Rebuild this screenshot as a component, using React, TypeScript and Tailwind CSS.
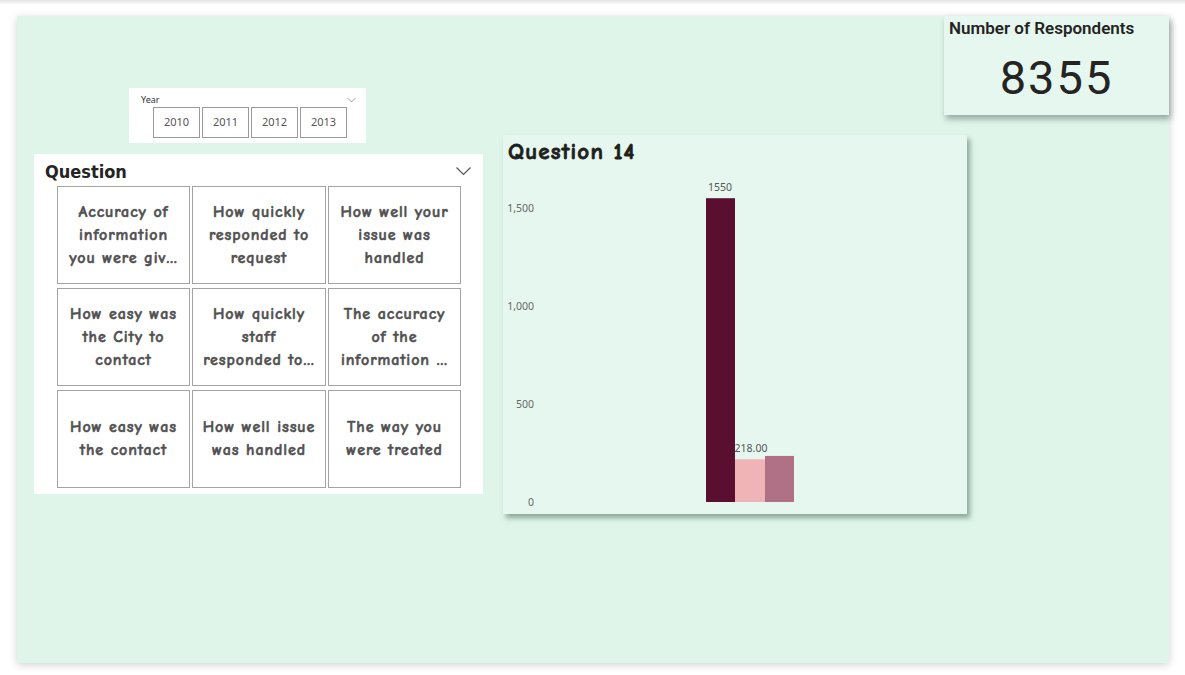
import React from "react";

const comic = { fontFamily: '"Comic Sans MS", "Comic Neue", cursive' };

const questions: string[][] = [
  ["Accuracy of", "information", "you were giv…"],
  ["How quickly", "responded to", "request"],
  ["How well your", "issue was", "handled"],
  ["How easy was", "the City to", "contact"],
  ["How quickly", "staff", "responded to…"],
  ["The accuracy", "of the", "information …"],
  ["How easy was", "the contact"],
  ["How well issue", "was handled"],
  ["The way you", "were treated"],
];

function Chevron({ className }: { className?: string }) {
  return (
    <svg className={className} viewBox="0 0 16 10" fill="none" stroke="currentColor" strokeWidth="1.2">
      <path d="M1 1.5 L8 8.5 L15 1.5" />
    </svg>
  );
}

function YearSlicer() {
  return (
    <div className="ml-[95px] w-[237px] h-[55px] bg-white relative" style={{ fontFamily: '"Noto Sans", "Liberation Sans", sans-serif' }}>
      <div className="flex items-center justify-between pl-[12px] pr-[10px] pt-[4px] h-[19px]">
        <span className="text-[9px] leading-none text-[#333]">Year</span>
        <Chevron className="w-[9px] h-[6px] text-[#777]" />
      </div>
      <div className="flex gap-[2px] pl-[24px]">
        {["2010", "2011", "2012", "2013"].map((y) => (
          <div
            key={y}
            className="h-[31px] w-[47px] border border-[#9a9a9a] flex items-center justify-center text-[11px] text-[#555]"
          >
            {y}
          </div>
        ))}
      </div>
    </div>
  );
}

function QuestionSlicer() {
  return (
    <div className="mt-[11px] w-[449px] h-[340px] bg-white relative">
      <div className="flex items-center justify-between pl-[11px] pr-[11px] h-[32px] pt-[2px]">
        <span className="text-[18px] font-bold text-[#252423]" style={{ fontFamily: '"DejaVu Sans Condensed", "Liberation Sans", sans-serif' }}>
          Question
        </span>
        <Chevron className="w-[17px] h-[10px] text-[#555]" />
      </div>
      <div className="grid grid-cols-[133px_134px_133px] grid-rows-[98px_98px_98px] gap-x-[2px] gap-y-[4px] pl-[23px]">
        {questions.map((q) => (
          <div
            key={q.join(" ")}
            className="border border-[#a3a3a3] flex flex-col items-center justify-center text-center text-[16px] leading-[23px] font-bold text-[#505050] tracking-[0.9px] [-webkit-text-stroke:0.5px_#505050] whitespace-nowrap overflow-hidden"
            style={comic}
          >
            {q.map((l) => (
              <span key={l}>{l}</span>
            ))}
          </div>
        ))}
      </div>
    </div>
  );
}

function RespondentsCard() {
  return (
    <div className="self-end w-[225px] h-[99px] bg-[#e6f7ef] shadow-[2px_4px_6px_rgba(60,80,70,0.45)] flex flex-col">
      <div className="pl-[5px] pt-[2px] text-[17px] text-[#252423] leading-[20px]" style={{ fontFamily: '"Roboto", "Liberation Sans", sans-serif', fontWeight: 600 }}>
        Number of Respondents
      </div>
      <div className="flex-1 flex items-center justify-center pt-[4px] text-[47px] text-[#252423] tracking-[2px]" style={{ fontFamily: '"Roboto", "Liberation Sans", sans-serif' }}>
        8355
      </div>
    </div>
  );
}

function ChartCard() {
  const base = 367;
  const scale = 98 / 500;
  const bars = [
    { x: 203, w: 29, v: 1550, c: "#5a0f30" },
    { x: 232, w: 30, v: 218, c: "#f0b4b6" },
    { x: 262, w: 29, v: 235, c: "#b07085" },
  ];
  return (
    <div className="mt-[20px] w-[464px] h-[379px] bg-[#e6f7ef] shadow-[3px_4px_5px_rgba(60,90,75,0.5)] relative">
      <svg className="absolute inset-0" width="464" height="379" style={{ fontFamily: '"Noto Sans", "Liberation Sans", sans-serif' }}>
        {[
          ["1,500", 73],
          ["1,000", 171],
          ["500", 269],
          ["0", 367],
        ].map(([t, y]) => (
          <text key={t as string} x={31} y={(y as number) + 4} textAnchor="end" fontSize="10.5" fill="#666">
            {t}
          </text>
        ))}
        {bars.map((b) => (
          <rect key={b.x} x={b.x} y={base - b.v * scale} width={b.w} height={b.v * scale} fill={b.c} />
        ))}
        <text x={217} y={56} textAnchor="middle" fontSize="10.5" fill="#555">1550</text>
        <text x={248} y={317} textAnchor="middle" fontSize="10.5" fill="#555">218.00</text>
      </svg>
      <div
        className="relative pl-[5px] pt-[3px] text-[23px] font-bold text-[#1f1f1f] leading-[28px] tracking-[1.2px] [-webkit-text-stroke:0.8px_#1f1f1f]"
        style={comic}
      >
        Question 14
      </div>
    </div>
  );
}

export default function App() {
  return (
    <div className="w-[1185px] h-[675px] bg-white relative overflow-hidden">
      <div className="h-[4px] bg-gradient-to-b from-[#e4e4e4] to-[#f8f8f8]" />
      <div className="mt-[12px] ml-[17px] w-[1152px] h-[647px] bg-[#dff5ea] shadow-[0_2px_8px_rgba(0,0,0,0.18)] rounded-b-[3px] flex">
        <div className="w-[466px] pl-[17px] pt-[72px] flex flex-col">
          <YearSlicer />
          <QuestionSlicer />
        </div>
        <div className="flex-1 flex flex-col pl-[20px]">
          <RespondentsCard />
          <ChartCard />
        </div>
      </div>
    </div>
  );
}
